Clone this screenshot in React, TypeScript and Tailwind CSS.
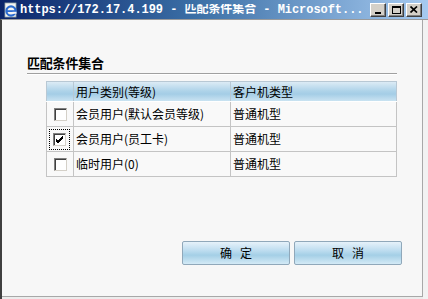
import React from "react";

const cjk = { fontFamily: '"Noto Sans CJK SC", "Noto Sans", sans-serif' };

function WinBtn({ children }: { children: React.ReactNode }) {
  return (
    <div className="w-[16px] h-[14px] bg-[#d4d0c8] border-t border-l border-t-white border-l-white border-b border-r border-b-[#404040] border-r-[#404040] flex items-center justify-center shadow-[inset_-1px_-1px_0_#808080]">
      {children}
    </div>
  );
}

function CheckBox({ checked }: { checked?: boolean }) {
  return (
    <div className="w-[13px] h-[13px] bg-white border border-t-[#808080] border-l-[#808080] border-b-[#d4d0c8] border-r-[#d4d0c8] shadow-[inset_1px_1px_0_#404040] flex items-center justify-center">
      {checked && (
        <svg width="9" height="9" viewBox="0 0 9 9">
          <path d="M1 4 L3 6 L8 1 M1 5 L3 7 L8 2 M1 6 L3 8 L8 3" stroke="#000" strokeWidth="1" fill="none" />
        </svg>
      )}
    </div>
  );
}

export default function App() {
  const rows = [
    { a: "会员用户(默认会员等级)", b: "普通机型", c: false },
    { a: "会员用户(员工卡)", b: "普通机型", c: true },
    { a: "临时用户(0)", b: "普通机型", c: false },
  ];
  return (
    <div className="w-[428px] h-[299px] flex flex-col bg-[#ececec] overflow-hidden">
      {/* title bar */}
      <div className="h-[19px] flex items-center bg-[linear-gradient(to_right,#0a246a,#3a6ea5_45%,#a6caf0)] pl-[3px] pr-[6px] shrink-0">
        <svg width="16" height="16" viewBox="0 0 16 16" className="shrink-0">
          <rect x="2" y="1" width="11" height="14" fill="#f4f4f4" stroke="#9aa" strokeWidth="0.8" />
          <circle cx="8" cy="9" r="4.6" fill="none" stroke="#2a6bd0" strokeWidth="2.2" />
          <rect x="3.6" y="8.2" width="8.8" height="1.8" fill="#2a6bd0" />
          <rect x="9.5" y="9.8" width="4" height="2" fill="#f4f4f4" />
        </svg>
        <div
          className="ml-[1px] text-white font-bold text-[12px] leading-none whitespace-nowrap tracking-[-0.05px] flex-1 overflow-hidden"
          style={{ fontFamily: '"Liberation Mono", "Noto Sans CJK SC", monospace' }}
        >
          https://172.17.4.199 - 匹配条件集合 - Microsoft...
        </div>
        <div className="flex items-center ml-[8px]">
          <WinBtn>
            <div className="w-[6px] h-[2px] bg-black mt-[7px] -ml-[1px]" />
          </WinBtn>
          <div className="w-[2px]" />
          <WinBtn>
            <div className="w-[9px] h-[8px] border border-black border-t-2" />
          </WinBtn>
          <div className="w-[2px]" />
          <WinBtn>
            <svg width="8" height="7" viewBox="0 0 8 7">
              <path d="M0.5 0.5 L7 6.5 M7 0.5 L0.5 6.5" stroke="#000" strokeWidth="1.7" />
            </svg>
          </WinBtn>
        </div>
      </div>
      {/* frame */}
      <div className="flex-1 flex border-l-2 border-l-[#404040] border-t border-t-[#9a9a9a]">
        <div className="flex-1 flex flex-col bg-[#f7f7f7] border-b border-b-[#a8a8a8] border-r border-r-[#a8a8a8] mb-[2px]" style={cjk}>
          <div className="mt-[34px] ml-[25px] mr-[25px] text-[13px] font-bold text-black leading-[18px] tracking-[-0.2px]">
            匹配条件集合
          </div>
          <div className="ml-[25px] mr-[25px] mt-[1px] h-[2px] border-t border-t-[#a0a0a0] border-b border-b-white" />
          <table className="ml-[44px] mt-[6px] w-[350px] border-collapse text-[12px] text-black table-fixed">
            <colgroup>
              <col className="w-[27px]" />
              <col className="w-[157px]" />
              <col className="w-[166px]" />
            </colgroup>
            <thead>
              <tr className="h-[20px] bg-[linear-gradient(to_bottom,#dcebf5,#aed3e9_45%,#a4cde6_60%,#cfe6f3)]">
                <th className="border border-[#b8c8d4] border-b-[#ffffff]" />
                <th className="border border-[#b8c8d4] border-b-[#ffffff] text-left font-normal pl-[2px] leading-none">用户类别(等级)</th>
                <th className="border border-[#b8c8d4] border-b-[#ffffff] text-left font-normal pl-[2px] leading-none">客户机类型</th>
              </tr>
            </thead>
            <tbody>
              {rows.map((r, i) => (
                <tr key={i} className="h-[25px] bg-[#f9f9f9]">
                  <td className="border border-[#c4c4c4] p-0">
                    <div className="flex items-center justify-center">
                      {r.c ? (
                        <div className="outline outline-1 outline-dotted outline-black outline-offset-[3px] -ml-[1px]">
                          <CheckBox checked />
                        </div>
                      ) : (
                        <CheckBox />
                      )}
                    </div>
                  </td>
                  <td className="border border-[#c4c4c4] pl-[2px] leading-none whitespace-nowrap">{r.a}</td>
                  <td className="border border-[#c4c4c4] pl-[2px] leading-none">{r.b}</td>
                </tr>
              ))}
            </tbody>
          </table>
          <div className="mt-[64px] ml-[180px] flex gap-[4px]">
            {[["确", "定"], ["取", "消"]].map((t) => (
              <div
                key={t[0]}
                className="w-[108px] h-[24px] rounded-[2px] border border-[#90a8ba] bg-[linear-gradient(to_bottom,#e6f2fa,#bcdcef_40%,#a4cfe6_60%,#d4eaf6)] flex items-center justify-center gap-[8px] text-[12px] text-black leading-none"
              >
                <span>{t[0]}</span>
                <span>{t[1]}</span>
              </div>
            ))}
          </div>
        </div>
        <div className="w-[5px] bg-[#f2f2f2]" />
      </div>
    </div>
  );
}
